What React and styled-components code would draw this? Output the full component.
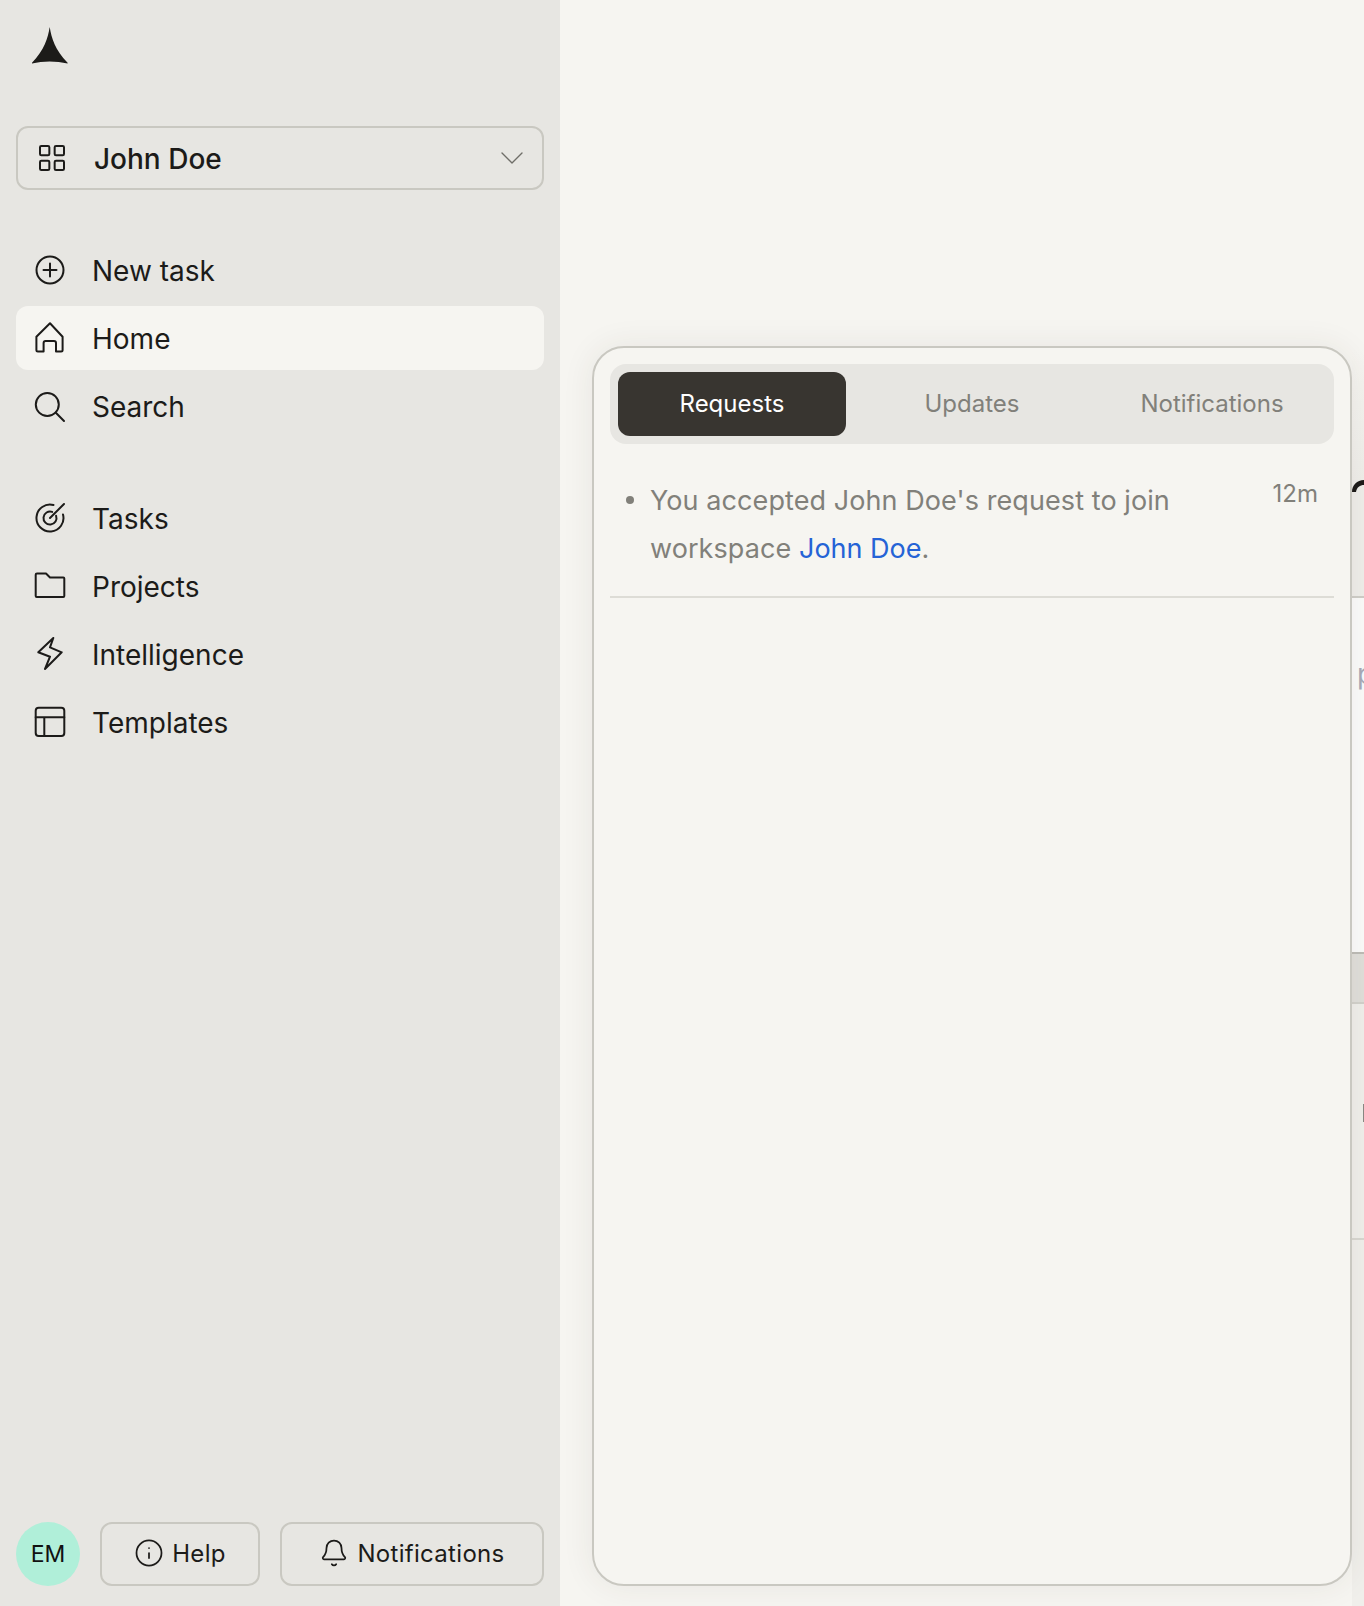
import React from 'react';
import styled, { createGlobalStyle } from 'styled-components';
import { LayoutGrid, ChevronDown, Info, Bell } from 'lucide-react';

const Global = createGlobalStyle`
  html, body { margin: 0; padding: 0; background: #f6f5f1; }
  body { font-family: Inter, "Liberation Sans", sans-serif; -webkit-font-smoothing: antialiased; }
  * { box-sizing: border-box; }
`;

const Page = styled.div`
  display: grid;
  grid-template-columns: 560px 1fr;
  width: 1364px;
  height: 1606px;
  overflow: hidden;
  background: #f6f5f1;
`;
const Sidebar = styled.aside`
  display: flex;
  flex-direction: column;
  background: #e7e6e2;
  padding: 27px 16px 20px;
`;
const LogoMark = styled.svg`
  display: block;
  width: 36px;
  height: 37px;
  margin-left: 16px;
  flex: none;
  fill: #1c1b19;
`;
const WorkspaceSelect = styled.button`
  display: flex;
  align-items: center;
  width: 528px;
  height: 64px;
  margin-top: 62px;
  padding: 0 10px 0 18px;
  border: 2px solid #c9c8c1;
  border-radius: 12px;
  background: transparent;
  color: #1c1b19;
  font: 500 28px Inter, sans-serif;
  svg:first-child { margin-right: 26px; }
  span { flex: 1; text-align: left; padding-top: 2px; }
`;
const NavGroup = styled.nav`
  display: flex;
  flex-direction: column;
  gap: 4px;
  margin-top: ${p => p.$top}px;
`;
const NavRow = styled.a`
  display: flex;
  align-items: center;
  gap: 25px;
  height: 64px;
  padding-left: 17px;
  border-radius: 12px;
  color: #1c1b19;
  font-size: 28px;
  font-weight: 440;
  background: ${p => (p.$active ? '#f6f5f1' : 'transparent')};
`;
const NavLabel = styled.span`
  padding-top: 2px;
`;
const NavIcon = styled.svg.attrs({ viewBox: '0 0 34 34' })`
  width: 34px;
  height: 34px;
  flex: none;
  fill: none;
  stroke: currentColor;
  stroke-width: 2;
  stroke-linejoin: round;
  stroke-linecap: round;
`;
const Footer = styled.footer`
  display: flex;
  align-items: center;
  gap: 20px;
  margin-top: auto;
`;
const Avatar = styled.div`
  display: grid;
  place-items: center;
  width: 64px;
  height: 64px;
  border-radius: 50%;
  background: #b0efd9;
  color: #111;
  font-size: 23px;
`;
const FootButton = styled.button`
  display: flex;
  align-items: center;
  justify-content: center;
  gap: ${p => p.$gap}px;
  width: ${p => p.$w}px;
  height: 64px;
  padding: 0 0 2px;
  border: 2px solid #c9c8c1;
  border-radius: 12px;
  background: transparent;
  color: #1c1b19;
  font: 400 24px Inter, sans-serif;
  letter-spacing: 0.3px;
`;
const Main = styled.main`
  position: relative;
  min-width: 0;
`;
const Strip = styled.div`
  position: absolute;
  left: 792px;
  top: 347px;
  width: 12px;
  height: 1259px;
  overflow: hidden;
  background: #f0efeb;
`;
const StripBand = styled.div`
  position: relative;
  overflow: hidden;
  height: ${p => p.$h}px;
  background: ${p => p.$bg};
  border-bottom: 2px solid ${p => p.$line};
`;
const StripArc = styled.svg`
  position: absolute;
  left: 0;
  top: 133px;
  width: 12px;
  height: 12px;
  fill: #1c1b19;
`;
const StripGlyph = styled.span`
  position: absolute;
  left: 5px;
  top: 59px;
  color: #a8abb8;
  font-size: 28px;
  line-height: 34px;
`;
const StripTick = styled.i`
  position: absolute;
  left: 10.5px;
  top: 100px;
  width: 1.5px;
  height: 18px;
  background: #8a8984;
`;
const Popover = styled.section`
  position: absolute;
  left: 32px;
  top: 346px;
  width: 760px;
  height: 1240px;
  padding: 16px;
  border: 2px solid #c9c8c1;
  border-radius: 32px;
  background: #f6f5f1;
  box-shadow: 0 0 32px rgba(60, 55, 40, 0.08);
`;
const TabList = styled.div`
  display: grid;
  grid-template-columns: repeat(3, 1fr);
  gap: 12px;
  padding: 8px;
  height: 80px;
  border-radius: 16px;
  background: #e7e6e2;
`;
const Tab = styled.button`
  border: 0;
  padding: 0 0 2px;
  border-radius: 12px;
  background: ${p => (p.$active ? '#383530' : 'transparent')};
  color: ${p => (p.$active ? '#fff' : '#81807a')};
  font: 400 24px Inter, sans-serif;
`;
const Item = styled.div`
  display: grid;
  grid-template-columns: 1fr auto;
  padding: 33px 16px 23px 16px;
  border-bottom: 2px solid #dddcd6;
`;
const ItemText = styled.p`
  position: relative;
  margin: 0;
  padding-left: 24px;
  max-width: 560px;
  color: #81807a;
  font-size: 27px;
  letter-spacing: 0.08px;
  line-height: 48px;
  &::before {
    content: '';
    position: absolute;
    left: 0;
    top: 19px;
    width: 8px;
    height: 8px;
    border-radius: 50%;
    background: #81807a;
  }
`;
const WorkspaceLink = styled.a`
  color: #2563d6;
  letter-spacing: 0;
`;
const Time = styled.span`
  margin-top: -1px;
  color: #81807a;
  font-size: 24px;
  line-height: 36px;
`;

const PlusIcon = () => (
  <NavIcon>
    <circle cx="17" cy="17" r="13.5" />
    <path d="M17 10.5v13M10.5 17h13" />
  </NavIcon>
);
const HouseIcon = () => (
  <NavIcon>
    <path d="M17 2.3 3.4 15.7V29a1.5 1.5 0 0 0 1.5 1.5h5.7V22a2 2 0 0 1 2-2h8.4a2 2 0 0 1 2 2v8.5h5.1a1.5 1.5 0 0 0 1.5-1.5V15.7Z" />
  </NavIcon>
);
const SearchIcon = () => (
  <NavIcon>
    <circle cx="14.3" cy="15.5" r="11.5" />
    <path d="M22.6 23.5 31 32" />
  </NavIcon>
);
const TargetIcon = () => (
  <NavIcon>
    <path d="M30 13.5A13.5 13.5 0 1 1 20.5 4" />
    <path d="M23.1 14.8A6.5 6.5 0 1 1 19.2 10.9" />
    <path d="M17 17 31 3" />
  </NavIcon>
);
const FolderIcon = () => (
  <NavIcon>
    <path d="M3.7 28H30.3a1 1 0 0 0 1-1V9.5a1 1 0 0 0-1-1H17L13 4.5H4a1.3 1.3 0 0 0-1.3 1.3V27a1 1 0 0 0 1 1Z" />
  </NavIcon>
);
const BoltIcon = () => (
  <NavIcon>
    <path d="M20.3 1 5.3 15.3 17 19.7 12 32 28.7 15.3 17 10.3Z" />
  </NavIcon>
);
const TemplateIcon = () => (
  <NavIcon>
    <rect x="2.7" y="2.7" width="28.6" height="28.3" rx="3" />
    <path d="M2.7 12.3h28.6M11.3 12.3V31" />
  </NavIcon>
);

const navMain = [
  { label: 'New task', Icon: PlusIcon },
  { label: 'Home', Icon: HouseIcon, active: true },
  { label: 'Search', Icon: SearchIcon },
];
const navWork = [
  { label: 'Tasks', Icon: TargetIcon },
  { label: 'Projects', Icon: FolderIcon },
  { label: 'Intelligence', Icon: BoltIcon },
  { label: 'Templates', Icon: TemplateIcon },
];

const NavList = ({ items }) => (
  <NavGroup $top={48}>
    {items.map(({ label, Icon, active }) => (
      <NavRow key={label} $active={active}>
        <Icon />
        <NavLabel>{label}</NavLabel>
      </NavRow>
    ))}
  </NavGroup>
);

export default function App() {
  return (
    <Page>
      <Global />
      <Sidebar>
        <LogoMark viewBox="0 0 36 37">
          <path d="M17.7 0C19.5 11 23 23 35.6 35.8V36.6C24 33.8 11 33.8 0 36.6V35.8C12.4 23 15.9 11 17.7 0Z" />
        </LogoMark>
        <WorkspaceSelect>
          <LayoutGrid size={32} strokeWidth={1.5} />
          <span>John Doe</span>
          <ChevronDown size={40} strokeWidth={0.8} color="#6f6e68" />
        </WorkspaceSelect>
        <NavList items={navMain} />
        <NavList items={navWork} />
        <Footer>
          <Avatar>EM</Avatar>
          <FootButton $w={160} $gap={8}><Info size={30} strokeWidth={1.4} />Help</FootButton>
          <FootButton $w={264} $gap={8}><Bell size={30} strokeWidth={1.4} />Notifications</FootButton>
        </Footer>
      </Sidebar>
      <Main>
        <Strip>
          <StripBand $h={251} $bg="linear-gradient(#f6f5f1, #efeeea 55%)" $line="#cfcec8">
            <StripArc viewBox="0 0 12 12"><path d="M0 12C0 5 5 0 12 0V5C8 5 5 7 4 12Z" /></StripArc>
          </StripBand>
          <StripBand $h={356} $bg="#fbfbfa" $line="#bdbcb6">
            <StripGlyph>p</StripGlyph>
          </StripBand>
          <StripBand $h={50} $bg="#e0dfda" $line="#d2d1cb" />
          <StripBand $h={236} $bg="#f0efeb" $line="#d8d7d1">
            <StripTick />
          </StripBand>
        </Strip>
        <Popover>
          <TabList>
            <Tab $active>Requests</Tab>
            <Tab>Updates</Tab>
            <Tab>Notifications</Tab>
          </TabList>
          <Item>
            <ItemText>You accepted John Doe's request to join workspace <WorkspaceLink>John Doe</WorkspaceLink>.</ItemText>
            <Time>12m</Time>
          </Item>
        </Popover>
      </Main>
    </Page>
  );
}
